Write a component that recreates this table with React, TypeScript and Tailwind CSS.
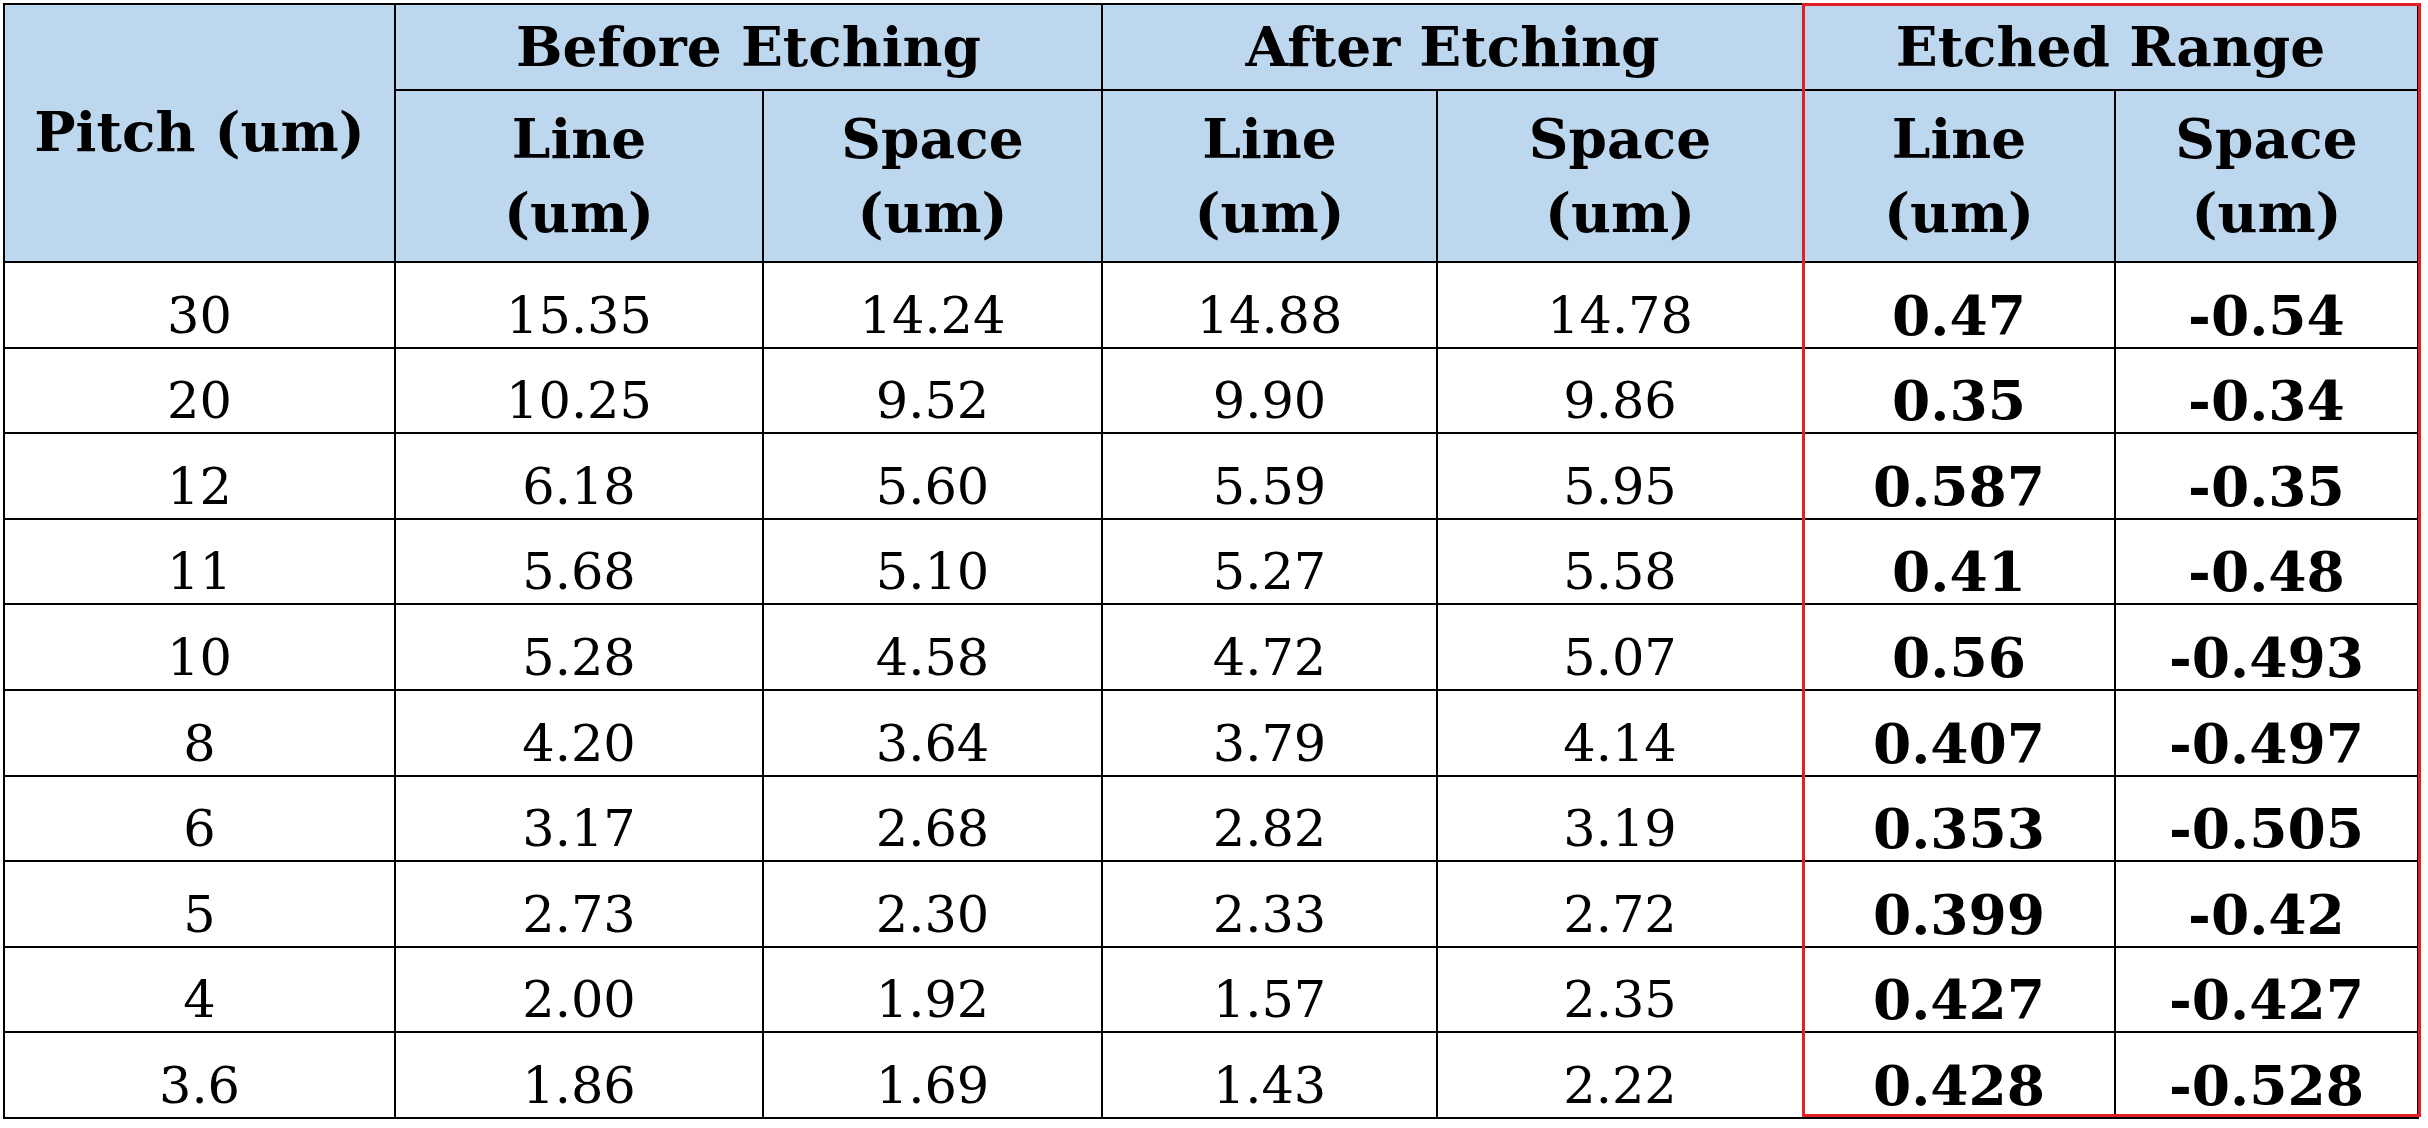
import React from "react";

const rows: string[][] = [
  ["30", "15.35", "14.24", "14.88", "14.78", "0.47", "-0.54"],
  ["20", "10.25", "9.52", "9.90", "9.86", "0.35", "-0.34"],
  ["12", "6.18", "5.60", "5.59", "5.95", "0.587", "-0.35"],
  ["11", "5.68", "5.10", "5.27", "5.58", "0.41", "-0.48"],
  ["10", "5.28", "4.58", "4.72", "5.07", "0.56", "-0.493"],
  ["8", "4.20", "3.64", "3.79", "4.14", "0.407", "-0.497"],
  ["6", "3.17", "2.68", "2.82", "3.19", "0.353", "-0.505"],
  ["5", "2.73", "2.30", "2.33", "2.72", "0.399", "-0.42"],
  ["4", "2.00", "1.92", "1.57", "2.35", "0.427", "-0.427"],
  ["3.6", "1.86", "1.69", "1.43", "2.22", "0.428", "-0.528"],
];

const hdr = "bg-[#bdd7ee] flex items-center justify-center text-center font-bold text-[55px] leading-[74px] text-black";

export default function App() {
  return (
    <div className="w-[2428px] h-[1128px] bg-white p-[3px] font-['DejaVu_Serif',serif]">
      <div className="relative w-[2416px]">
        <div className="grid bg-black gap-[2px] p-[2px] grid-cols-[389px_366px_337px_333px_364px_310px_301px] grid-rows-[84px_170px_repeat(10,83.6px)]">
          <div className={`${hdr} row-span-2 pb-[2px]`}>Pitch (um)</div>
          <div className={`${hdr} col-span-2`}>Before Etching</div>
          <div className={`${hdr} col-span-2`}>After Etching</div>
          <div className={`${hdr} col-span-2`}>Etched Range</div>
          {[0, 1, 2].map((g) => (
            <React.Fragment key={g}>
              <div className={hdr}>
                Line
                <br />
                (um)
              </div>
              <div className={hdr}>
                Space
                <br />
                (um)
              </div>
            </React.Fragment>
          ))}
          {rows.map((r, i) =>
            r.map((v, j) => (
              <div
                key={`${i}-${j}`}
                className={`bg-white flex items-center justify-center pt-[22px] text-black ${
                  j >= 5 ? "font-bold text-[55px]" : "font-normal text-[51px]"
                }`}
              >
                {v}
              </div>
            ))
          )}
        </div>
        <div className="absolute left-[1799px] top-0 w-[619px] h-[1114px] border-[3px] border-[#e31e24] pointer-events-none" />
      </div>
    </div>
  );
}
